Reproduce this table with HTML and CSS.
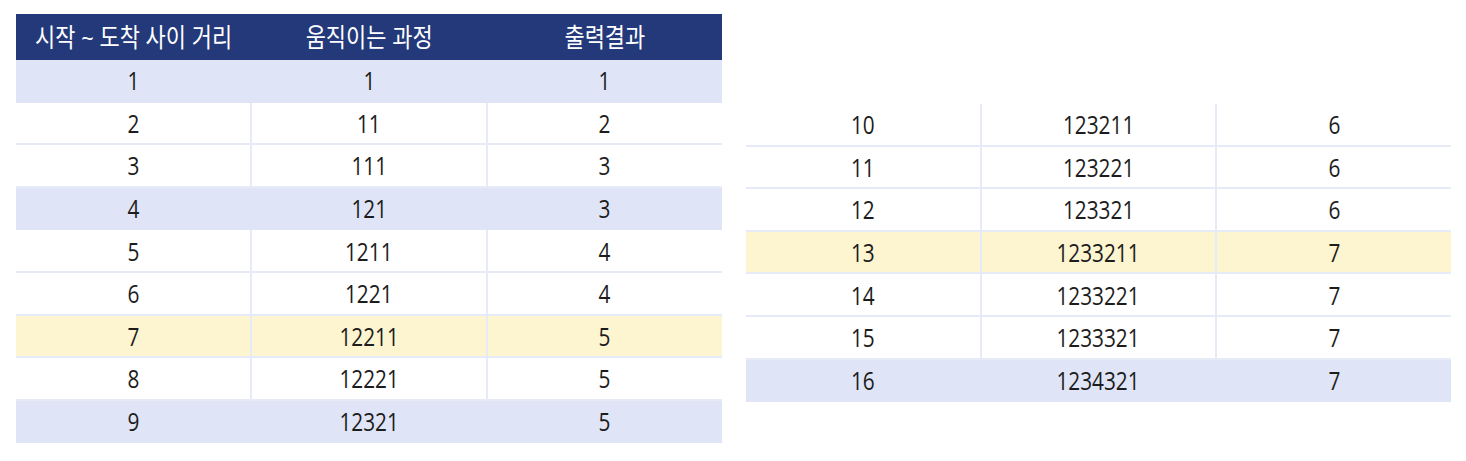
FILE: index.html
```html
<!DOCTYPE html>
<html lang="ko">
<head>
<meta charset="utf-8">
<link rel="stylesheet" href="styles.css">
</head>
<body>
<div class="page">
  <table class="grid grid-left">
    <thead>
      <tr class="head"><th><span class="h">시작 ~ 도착 사이 거리</span></th><th><span class="h">움직이는 과정</span></th><th><span class="h">출력결과</span></th></tr>
    </thead>
    <tbody>
      <tr class="blue"><td><span class="t">1</span></td><td><span class="t">1</span></td><td><span class="t">1</span></td></tr>
      <tr><td><span class="t">2</span></td><td><span class="t">11</span></td><td><span class="t">2</span></td></tr>
      <tr><td><span class="t">3</span></td><td><span class="t">111</span></td><td><span class="t">3</span></td></tr>
      <tr class="blue"><td><span class="t">4</span></td><td><span class="t">121</span></td><td><span class="t">3</span></td></tr>
      <tr><td><span class="t">5</span></td><td><span class="t">1211</span></td><td><span class="t">4</span></td></tr>
      <tr><td><span class="t">6</span></td><td><span class="t">1221</span></td><td><span class="t">4</span></td></tr>
      <tr class="yellow"><td><span class="t">7</span></td><td><span class="t">12211</span></td><td><span class="t">5</span></td></tr>
      <tr><td><span class="t">8</span></td><td><span class="t">12221</span></td><td><span class="t">5</span></td></tr>
      <tr class="blue"><td><span class="t">9</span></td><td><span class="t">12321</span></td><td><span class="t">5</span></td></tr>
    </tbody>
  </table>
  <table class="grid grid-right">
    <tbody>
      <tr><td><span class="t">10</span></td><td><span class="t">123211</span></td><td><span class="t">6</span></td></tr>
      <tr><td><span class="t">11</span></td><td><span class="t">123221</span></td><td><span class="t">6</span></td></tr>
      <tr><td><span class="t">12</span></td><td><span class="t">123321</span></td><td><span class="t">6</span></td></tr>
      <tr class="yellow"><td><span class="t">13</span></td><td><span class="t">1233211</span></td><td><span class="t">7</span></td></tr>
      <tr><td><span class="t">14</span></td><td><span class="t">1233221</span></td><td><span class="t">7</span></td></tr>
      <tr><td><span class="t">15</span></td><td><span class="t">1233321</span></td><td><span class="t">7</span></td></tr>
      <tr class="blue"><td><span class="t">16</span></td><td><span class="t">1234321</span></td><td><span class="t">7</span></td></tr>
    </tbody>
  </table>
</div>
</body>
</html>
```

FILE: styles.css
```css
html, body {
  margin: 0;
  padding: 0;
  background: #ffffff;
}

.page {
  display: flex;
  align-items: flex-start;
  gap: 24px;
  padding: 14px 0 0 16px;
  font-family: "Open Sans", "Noto Sans CJK KR", sans-serif;
  color: #1c1c1c;
}

.grid {
  border-collapse: collapse;
  table-layout: fixed;
  border-spacing: 0;
}

.grid-left {
  width: 706px;
}

.grid-right {
  width: 705px;
  margin-top: 90px;
}

.grid th,
.grid td {
  padding: 0;
  text-align: center;
  font-size: 26px;
  font-weight: 400;
  line-height: 1;
  border-right: 2px solid #e7ebf7;
  border-bottom: 2px solid #e7ebf7;
}

.grid th:last-child,
.grid td:last-child {
  border-right: none;
}

.grid td {
  height: 40.6px;
}

.head th {
  height: 46px;
  background: #23397a;
  color: #ffffff;
  border-color: #23397a;
  border-bottom: none;
}

.blue td {
  background: #dfe5f6;
  border-color: #dfe5f6;
}

.yellow td {
  background: #fdf5d0;
}

.t {
  display: inline-block;
  transform: scaleX(0.8);
  white-space: nowrap;
}

.h {
  display: inline-block;
  transform: scaleX(0.845);
  white-space: nowrap;
}
```
